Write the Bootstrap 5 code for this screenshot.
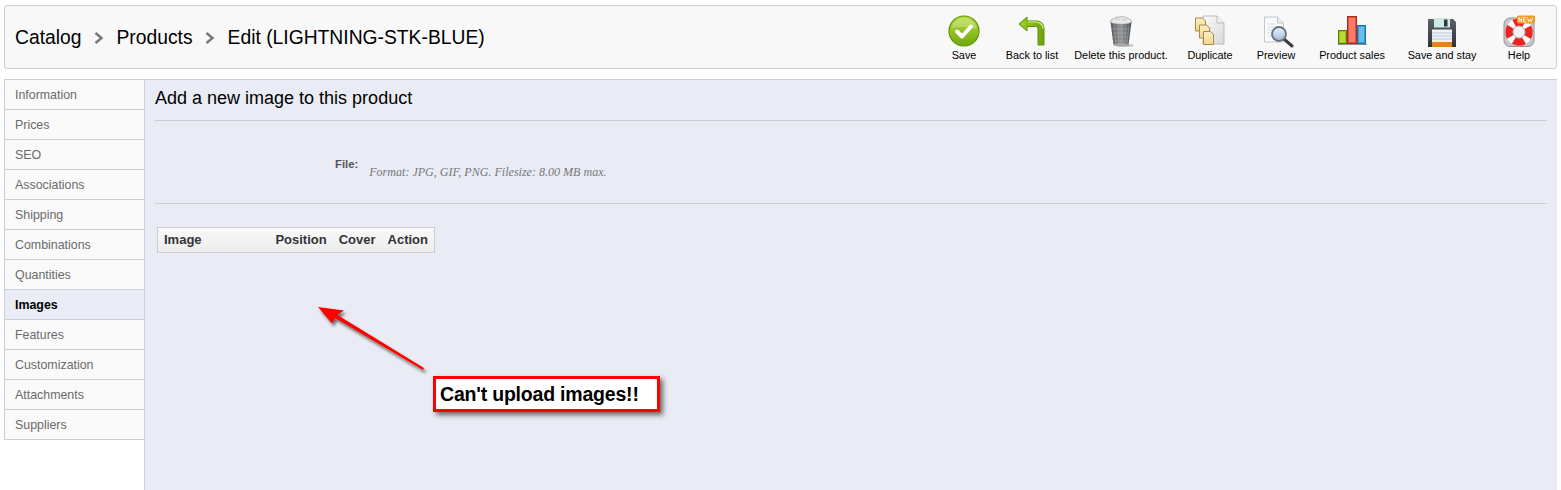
<!doctype html>
<html lang="en">
<head>
<meta charset="utf-8">
<title>Edit product</title>
<link href="https://cdn.jsdelivr.net/npm/bootstrap@5.3.0/dist/css/bootstrap.min.css" rel="stylesheet">
<style>
html,body{height:490px;overflow:hidden}
body{background:#fff;font-family:"Liberation Sans",Arial,sans-serif;color:#000;position:relative}
.shell{padding:5px 4px 0 4px;height:490px;display:flex;flex-direction:column}
.topbar{height:64px;border:1px solid #ccc;border-radius:3px;background:#f8f8f8;flex:none}
.crumbs{font-size:19.3px;padding-left:10px;padding-top:2px;color:#000}
.crumbs .sep{width:10px;margin:0 12.500px;display:block}
.tools{padding-right:6px;padding-top:9px;align-self:stretch}
.tool{display:flex;flex-direction:column;align-items:center;font-size:10.85px;line-height:12px;color:#000;text-decoration:none;white-space:nowrap}
.tool svg{display:block;height:32px;width:32px;overflow:visible;margin-bottom:2px}
.w-a{width:68px}.w-b{width:110px}.w-c{width:64px}.w-d{width:88px}.w-e{width:92px}.w-f{width:62px}
.body-row{margin-top:10px;flex:1;min-height:0}
.side{width:141px;flex:none;align-self:flex-start;border-top:1px solid #ccced7}
.side a{display:block;height:30px;line-height:31px;padding-left:10px;font-size:12.4px;color:#6a6a6a;background:#fafafa;text-decoration:none;border:1px solid #ccced7;border-width:0 1px 1px 1px}
.side a.on{background:#e9ecf4;color:#000;font-weight:700;border-right-color:#e9ecf4}
.main{flex:1;background:#e9ecf4;border:1px solid #ccced7;border-width:1px 0 0 1px;margin-left:-1px;padding:0 10px;min-width:0}
.main h4{font-size:18px;line-height:20px;font-weight:400;margin:8px 0 0;padding-bottom:12px;border-bottom:1px solid #ccc;color:#000}
.file-row{height:83px;border-bottom:1px solid #ccc;padding-left:180px;padding-top:36px;display:flex}
.file-lab{font-size:11.3px;font-weight:700;color:#555;line-height:14px}
.file-help{font-family:"Liberation Serif",serif;font-style:italic;font-size:12.05px;color:#777;margin-left:11px;margin-top:7px;line-height:16px}
.imgs{border-collapse:collapse;margin:23px 0 0 2px;background:linear-gradient(#f9f9f9,#ececec);width:278px}
.imgs th{font-size:13px;font-weight:700;color:#333;height:25px;padding:0 6px 1px;border-top:1px solid #ccc;border-bottom:1px solid #ccc;white-space:nowrap}
.imgs th:first-child{border-left:1px solid #ccc;width:113px;padding-left:6px}
.imgs th:last-child{border-right:1px solid #ccc}
.note{position:absolute;left:433px;top:376px;width:227px;height:36px;border:3px solid #f00;background:#fff;font-size:19.5px;font-weight:700;line-height:30px;padding-left:4px;white-space:nowrap;box-shadow:3px 3px 5px rgba(60,60,60,.75);letter-spacing:-.2px}
.pointer{position:absolute;left:310px;top:300px;width:125px;height:80px;overflow:visible}
</style>
</head>
<body>
<div class="shell">
  <div class="topbar d-flex align-items-center justify-content-between">
    <div class="crumbs d-flex align-items-center">
      <span>Catalog</span>
      <svg class="sep" viewBox="0 0 10 14" height="14"><path d="M1.500 2l6 5-6 5" fill="none" stroke="#777" stroke-width="2.400"/></svg>
      <span>Products</span>
      <svg class="sep" viewBox="0 0 10 14" height="14"><path d="M1.500 2l6 5-6 5" fill="none" stroke="#777" stroke-width="2.400"/></svg>
      <span>Edit (LIGHTNING-STK-BLUE)</span>
    </div>
    <div class="tools d-flex align-items-start">
      <svg width="0" height="0" class="position-absolute">
        <defs>
          <linearGradient id="gGreen" x1="0" y1="0" x2="0" y2="1"><stop offset="0" stop-color="#b8dc3c"/><stop offset="1" stop-color="#6fa80c"/></linearGradient>
          <linearGradient id="gArrow" x1="0" y1="0" x2="1" y2="0"><stop offset="0" stop-color="#9fd024"/><stop offset="1" stop-color="#6ea30d"/></linearGradient>
          <linearGradient id="gCan" x1="0" y1="0" x2="1" y2="0"><stop offset="0" stop-color="#55585a"/><stop offset=".5" stop-color="#8f9294"/><stop offset="1" stop-color="#494c4e"/></linearGradient>
          <linearGradient id="gPaper" x1="0" y1="0" x2="0" y2="1"><stop offset="0" stop-color="#fbf0c4"/><stop offset="1" stop-color="#f0d68f"/></linearGradient>
          <linearGradient id="gSheet" x1="0" y1="0" x2="1" y2="1"><stop offset="0" stop-color="#fafafa"/><stop offset="1" stop-color="#d6d8da"/></linearGradient>
          <linearGradient id="gLens" x1="0" y1="0" x2="0" y2="1"><stop offset="0" stop-color="#eef5fb"/><stop offset="1" stop-color="#9bbbd8"/></linearGradient>
          <linearGradient id="gDisk" x1="0" y1="0" x2="0" y2="1"><stop offset="0" stop-color="#5b6268"/><stop offset="1" stop-color="#2e3236"/></linearGradient>
        </defs>
      </svg>
      <a class="tool w-a" href="#"><svg viewBox="0 0 32 32"><circle cx="16" cy="16" r="15" fill="url(#gGreen)" stroke="#5f9208" stroke-width="1.200"/><path d="M3.500 14a12.500 11 0 0 1 25 0c-6-3-19-3-25 0z" fill="#fff" opacity=".25"/><path d="M9 16.500l5 5 9-10" fill="none" stroke="#fff" stroke-width="4" stroke-linecap="round" stroke-linejoin="round"/></svg>Save</a>
      <a class="tool w-a" href="#"><svg viewBox="0 0 32 32"><path d="M3 9L11 2v4h9c5 0 8 3 8 8v16h-6V14c0-1.500-1-2.500-2.500-2.500H11V16z" fill="url(#gArrow)" stroke="#5f8f0a" stroke-width="1"/><path d="M12 7h8c4 0 7 3 7 7" fill="none" stroke="#d7ee8a" stroke-width="1.200"/></svg>Back to list</a>
      <a class="tool w-b" href="#"><svg viewBox="0 0 32 32"><ellipse cx="20" cy="30.500" rx="9" ry="1.600" fill="#c9c9c9"/><path d="M5.500 7h21l-3 23c-3 1.800-12 1.800-15 0z" fill="url(#gCan)"/><path d="M9 10l2 19M13 10l1 20M17 10v20M21 10l-1 19M24 10l-2 19M7 14h18M8 18h16M8 22h15M9 26h14" stroke="#c8cacb" stroke-width=".7" opacity=".5"/><path d="M5.500 7c-.5-2.500 2.500-2.800 4-4 2-1.500 4-.5 6-1.200 3-.8 4.500.5 6.500 1.200 2.500.8 4.800 2 4.500 4-2 3-18.500 3-21 0z" fill="#e6e7e7" stroke="#8a8d8e" stroke-width=".6"/><path d="M10 5l3-1.500 2 2M17 3.500l3 2 2-2" fill="none" stroke="#b5b7b8" stroke-width=".7"/><ellipse cx="16" cy="29.800" rx="7.500" ry="1.500" fill="#a8abac"/></svg>Delete this product.</a>
      <a class="tool w-a" href="#"><svg viewBox="0 0 32 32"><path d="M9 1h14l7 7v21H9z" fill="url(#gSheet)" stroke="#b9bbbd" stroke-width="1"/><path d="M23 1v7h7" fill="#eef0f1" stroke="#b9bbbd"/><path d="M1.500 3h7l3 3v10h-10z" fill="url(#gPaper)" stroke="#a98a3e"/><path d="M5.500 10h7l3 3v10h-10z" fill="url(#gPaper)" stroke="#a98a3e"/><path d="M9.500 16.500h7l3 3v10h-10z" fill="url(#gPaper)" stroke="#a98a3e"/></svg>Duplicate</a>
      <a class="tool w-c" href="#"><svg viewBox="0 0 32 32"><path d="M4.500 2h13l6 6v19h-19z" fill="#fafbfc" stroke="#c3c5c8"/><path d="M17.500 2v6h6" fill="#e9ebed" stroke="#c3c5c8"/><path d="M7 9h9M7 12h7M7 15h6M7 18h5M7 21h6" stroke="#d6dce6" stroke-width="1"/><path d="M24 24l8 7" stroke="#3a3d40" stroke-width="3" stroke-linecap="round"/><circle cx="19" cy="19" r="7" fill="url(#gLens)" stroke="#64727f" stroke-width="1.800"/></svg>Preview</a>
      <a class="tool w-d" href="#"><svg viewBox="0 0 32 32"><rect x="2.500" y="15.500" width="8" height="13" fill="#9ac70e" stroke="#5a7d08"/><rect x="4" y="17" width="5" height="10" fill="#b8dd3a"/><rect x="11.500" y="1.500" width="9" height="27" fill="#e8513f" stroke="#a82b20"/><rect x="13" y="3" width="6" height="24" fill="#f87c68"/><rect x="21.500" y="10.500" width="8" height="18" fill="#3c9ad8" stroke="#1f6fa8"/><rect x="23" y="12" width="5" height="15" fill="#69bcee"/><path d="M2 29.500h29" stroke="#8a8f94" stroke-width="1"/></svg>Product sales</a>
      <a class="tool w-e" href="#"><svg viewBox="0 0 32 32"><path d="M2 4h25l3 3v25H2z" fill="url(#gDisk)"/><rect x="8" y="3" width="16" height="9.500" fill="#cfe9e9"/><rect x="18" y="4.500" width="3.500" height="7" fill="#33383c"/><rect x="6" y="14.500" width="20" height="17.500" fill="#f1f2f4"/><path d="M6 18h20M6 21h20M6 24h20" stroke="#b5c6dc" stroke-width="1"/><rect x="6" y="27" width="20" height="5" fill="#e98414"/></svg>Save and stay</a>
      <a class="tool w-f" href="#"><svg viewBox="0 0 32 32"><rect x="1" y="3" width="30" height="28.500" rx="6" fill="#c4c6c9" stroke="#8f9194"/><circle cx="16" cy="17" r="14" fill="#fff" stroke="#bdbdbd" stroke-width=".6"/><circle cx="16" cy="17" r="10" fill="none" stroke="#ee2424" stroke-width="7.500" stroke-dasharray="10.700 5" stroke-dashoffset="5.350"/><circle cx="16" cy="17" r="6" fill="#f3f3f3" stroke="#a8a8a8"/><rect x="14" y="0.500" width="18" height="8" rx="1.500" fill="#f39a1e"/><path d="M16 7V2.500l2.500 4.500V2.500M23.500 2.500h-3v4.500h3M20.500 4.700h2.500M24.500 2.500l1.200 4.500 1.300-3 1.300 3 1.200-4.500" fill="none" stroke="#fff" stroke-width=".8"/></svg>Help</a>
    </div>
  </div>
  <div class="body-row d-flex">
    <nav class="side">
      <a href="#">Information</a><a href="#">Prices</a><a href="#">SEO</a><a href="#">Associations</a><a href="#">Shipping</a><a href="#">Combinations</a><a href="#">Quantities</a><a href="#" class="on">Images</a><a href="#">Features</a><a href="#">Customization</a><a href="#">Attachments</a><a href="#">Suppliers</a>
    </nav>
    <main class="main">
      <h4>Add a new image to this product</h4>
      <div class="file-row">
        <span class="file-lab">File:</span>
        <span class="file-help">Format: JPG, GIF, PNG. Filesize: 8.00 MB max.</span>
      </div>
      <table class="imgs">
        <thead><tr><th>Image</th><th>Position</th><th>Cover</th><th>Action</th></tr></thead>
      </table>
    </main>
  </div>
</div>
<svg class="pointer" viewBox="0 0 125 80">
  <defs><filter id="fShadow" x="-20%" y="-20%" width="150%" height="150%"><feDropShadow dx="2" dy="3" stdDeviation="1.800" flood-color="#333" flood-opacity=".7"/></filter></defs>
  <path d="M8 7L34 10.500 27.500 15 114 68 113 70 25 18 22 23.500z" fill="#f00" filter="url(#fShadow)"/>
</svg>
<div class="note">Can't upload images!!</div>
</body>
</html>
